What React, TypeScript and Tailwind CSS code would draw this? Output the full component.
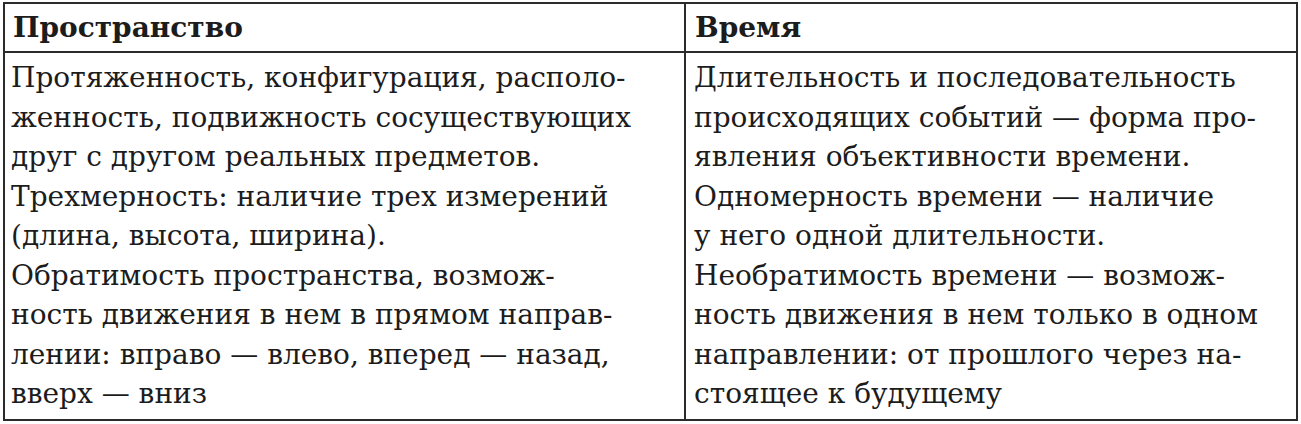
const left = [
  'Протяженность, конфигурация, располо-',
  'женность, подвижность сосуществующих',
  'друг с другом реальных предметов.',
  'Трехмерность: наличие трех измерений',
  '(длина, высота, ширина).',
  'Обратимость пространства, возмож-',
  'ность движения в нем в прямом направ-',
  'лении: вправо — влево, вперед — назад,',
  'вверх — вниз',
];

const right = [
  'Длительность и последовательность',
  'происходящих событий — форма про-',
  'явления объективности времени.',
  'Одномерность времени — наличие',
  'у него одной длительности.',
  'Необратимость времени — возмож-',
  'ность движения в нем только в одном',
  'направлении: от прошлого через на-',
  'стоящее к будущему',
];

function Cell({ lines, pad }: { lines: string[]; pad: string }) {
  return (
    <div className={pad + ' pt-[5px]'}>
      {lines.map((l, i) => (
        <div key={i} className="whitespace-nowrap leading-[39.5px]">
          {l}
        </div>
      ))}
    </div>
  );
}

export default function App() {
  return (
    <div className="w-[1301px] h-[424px] bg-white pt-[2px] px-[3px]">
      <div
        className="w-[1295px] h-[419px] border-2 border-[#2b2b2b] text-[#1c1c1c] text-[28px] grid grid-cols-[681px_1fr] grid-rows-[49px_1fr]"
        style={{ fontFamily: '"DejaVu Serif", serif' }}
      >
        <div className="border-r-2 border-b-2 border-[#2b2b2b] font-bold pl-[8px] leading-[47px]">
          Пространство
        </div>
        <div className="border-b-2 border-[#2b2b2b] font-bold pl-[9px] leading-[47px]">Время</div>
        <div className="border-r-2 border-[#2b2b2b]">
          <Cell lines={left} pad="pl-[6px]" />
        </div>
        <Cell lines={right} pad="pl-[8px]" />
      </div>
    </div>
  );
}
